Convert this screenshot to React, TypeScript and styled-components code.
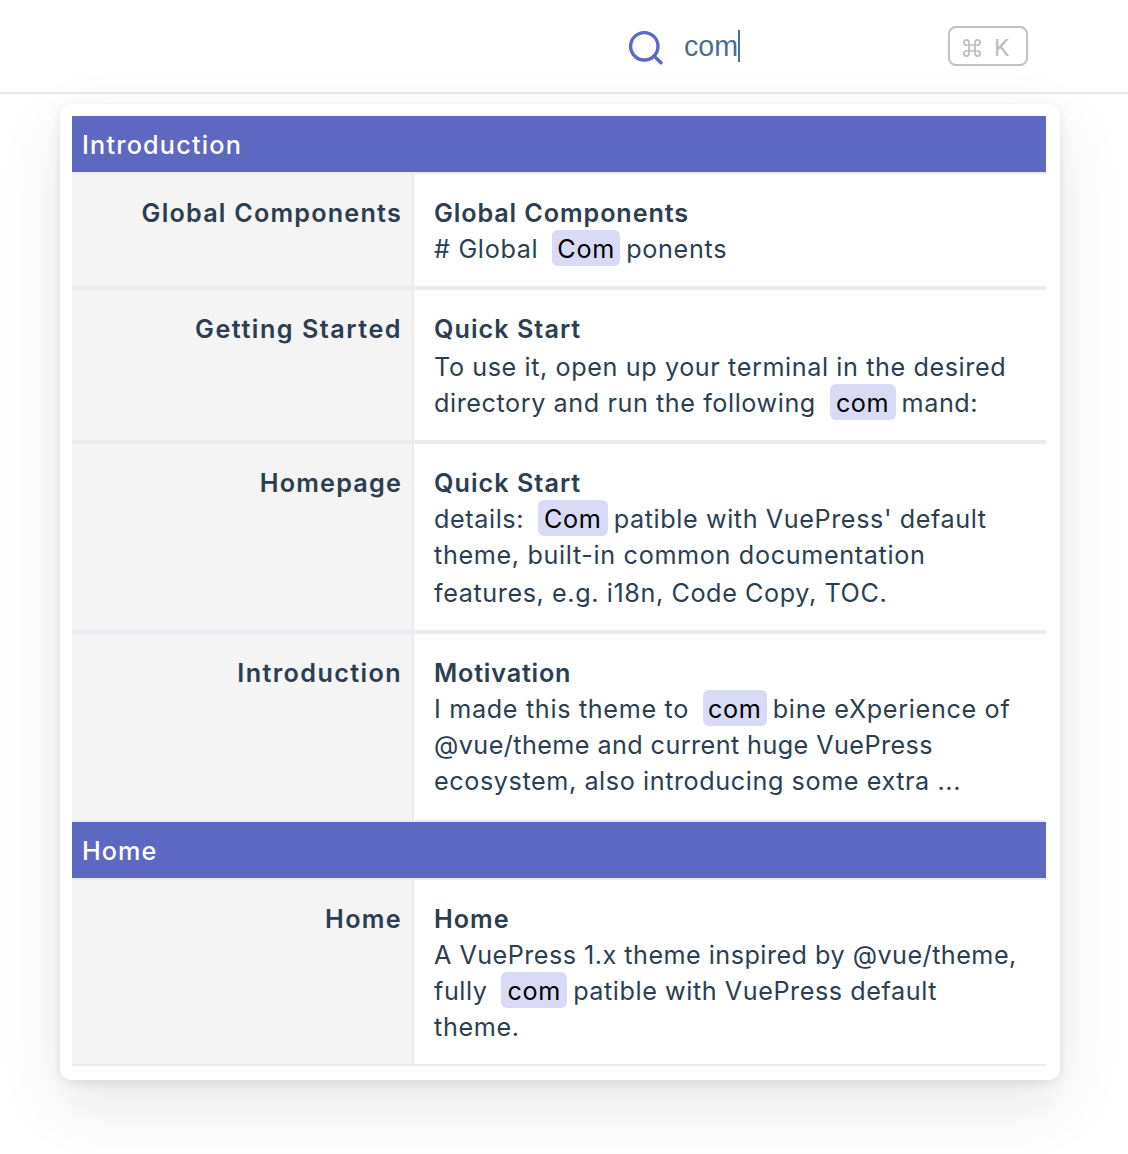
import React from "react";
import styled, { createGlobalStyle } from "styled-components";

const GlobalStyle = createGlobalStyle`
  * { box-sizing: border-box; }
  body {
    margin: 0;
    background: #fff;
    color: #2c3e50;
    font-family: Inter, "Liberation Sans", sans-serif;
    overflow: hidden;
  }
`;

const Page = styled.div`
  height: 1154px;
  overflow: hidden;
`;

const Navbar = styled.header`
  height: 94px;
  padding: 26px 100px 0 628px;
  display: flex;
  align-items: flex-start;
  border-bottom: 2px solid #e8e8ee;
`;

const SearchIcon = styled.svg`
  width: 36px;
  height: 36px;
  margin-top: 4px;
  flex: none;
`;

const Query = styled.div`
  display: flex;
  align-items: center;
  height: 40px;
  margin-left: 20px;
  flex: 1;
  font: 28.6px/40px "Liberation Sans", Arial, sans-serif;
  color: #4e6e8e;
`;

const Caret = styled.span`
  width: 2px;
  height: 32px;
  background: #4e6e8e;
`;

const Shortcut = styled.kbd`
  width: 80px;
  height: 40px;
  padding: 3px 0 0 12px;
  display: flex;
  align-items: center;
  gap: 12px;
  border: 2px solid #c2c2c2;
  border-radius: 8px;
  font: 24px/34px Roboto, sans-serif;
  color: #bdbdbd;
`;

const CommandIcon = styled.svg`
  width: 20px;
  height: 20px;
`;

const Panel = styled.main`
  width: 1000px;
  height: 976px;
  margin: 10px 0 0 60px;
  padding: 12px 14px 0 12px;
  background: #fff;
  border-radius: 12px;
  position: relative;
  font-size: 25.2px;
  box-shadow: 0 24px 64px rgba(0, 0, 0, 0.1), 0 4px 12px rgba(0, 0, 0, 0.08);
`;

const GroupTitle = styled.h2<{ $spacing?: number }>`
  margin: 0;
  height: 58px;
  padding: 0 10px;
  background: #5d68c1;
  border-bottom: 2px solid #eaeaef;
  color: #fff;
  font-size: inherit;
  font-weight: 500;
  line-height: 58px;
  letter-spacing: ${(p) => p.$spacing ?? 1.2}px;
`;

const Row = styled.section<{ $last?: boolean }>`
  display: grid;
  grid-template-columns: 342px 1fr;
  border-bottom: ${(p) => (p.$last ? 2 : 4)}px solid #eaeaef;
`;

const PageTitle = styled.div<{ $spacing?: number }>`
  padding: 20px 10px 20px 0;
  background: #f4f4f4;
  border-right: 2px solid #eaeaef;
  text-align: right;
  font-weight: 600;
  line-height: 38px;
  letter-spacing: ${(p) => p.$spacing ?? 1.3}px;
`;

const Content = styled.div<{ $bottom?: number }>`
  padding: 20px 0 ${(p) => p.$bottom ?? 20}px 20px;
`;

const Heading = styled.h3<{ $spacing?: number }>`
  margin: 0;
  height: 36px;
  font-size: inherit;
  font-weight: 600;
  line-height: 38px;
  letter-spacing: ${(p) => p.$spacing ?? 1.02}px;
`;

const Line = styled.div<{ $spacing?: number; $gap?: number }>`
  height: 36px;
  margin-top: ${(p) => p.$gap ?? 0}px;
  line-height: 38px;
  white-space: pre;
  letter-spacing: ${(p) => p.$spacing ?? 0.59}px;
`;

const Mark = styled.mark<{ $width: number }>`
  display: inline-block;
  vertical-align: top;
  width: ${(p) => p.$width}px;
  height: 36px;
  margin: 0 6px;
  text-align: center;
  background: #d9daf5;
  border-radius: 6px;
  color: #000;
`;

type TextLine = { before: string; hit?: string; after?: string; width?: number; gap?: number; spacing?: number };
type Result = {
  page: string;
  pageSpacing?: number;
  heading: string;
  headingSpacing?: number;
  bottom?: number;
  lines: TextLine[];
};
type Group = { title: string; spacing?: number; results: Result[] };

const groups: Group[] = [
  {
    title: "Introduction",
    results: [
      {
        page: "Global Components",
        pageSpacing: 1.2,
        heading: "Global Components",
        headingSpacing: 0.88,
        lines: [{ before: "# Global ", hit: "Com", after: "ponents", width: 68, spacing: 0.68 }],
      },
      {
        page: "Getting Started",
        pageSpacing: 1.5,
        heading: "Quick Start",
        lines: [
          { before: "To use it, open up your terminal in the desired", gap: 2 },
          { before: "directory and run the following ", hit: "com", after: "mand:", width: 66, spacing: 0.57 },
        ],
      },
      {
        page: "Homepage",
        pageSpacing: 1.18,
        heading: "Quick Start",
        lines: [
          { before: "details: ", hit: "Com", after: "patible with VuePress' default", width: 70 },
          { before: "theme, built-in common documentation", spacing: 0.65 },
          { before: "features, e.g. i18n, Code Copy, TOC.", gap: 2 },
        ],
      },
      {
        page: "Introduction",
        pageSpacing: 1.38,
        heading: "Motivation",
        headingSpacing: 0.8,
        bottom: 22,
        lines: [
          { before: "I made this theme to ", hit: "com", after: "bine eXperience of", width: 64, spacing: 0.67 },
          { before: "@vue/theme and current huge VuePress", spacing: 0.42 },
          { before: "ecosystem, also introducing some extra ...", spacing: 0.58 },
        ],
      },
    ],
  },
  {
    title: "Home",
    spacing: 1.05,
    results: [
      {
        page: "Home",
        heading: "Home",
        headingSpacing: 1.0,
        lines: [
          { before: "A VuePress 1.x theme inspired by @vue/theme,", spacing: 0.47 },
          { before: "fully ", hit: "com", after: "patible with VuePress default", width: 66, spacing: 0.56 },
          { before: "theme.", spacing: 0.65 },
        ],
      },
    ],
  },
];

export default function App() {
  return (
    <Page>
      <GlobalStyle />
      <Navbar>
        <SearchIcon viewBox="0 0 36 36" fill="none" stroke="#5d68c1" strokeWidth="3.4" strokeLinecap="round">
          <circle cx="16.3" cy="16.3" r="13.7" />
          <path d="M26.4 26.4 33 32.8" />
        </SearchIcon>
        <Query>
          com
          <Caret />
        </Query>
        <Shortcut>
          <CommandIcon viewBox="0 0 20 20" fill="none" stroke="#bdbdbd" strokeWidth="1.7">
            <path d="M7 7V4.4A2.6 2.6 0 1 0 4.4 7H15.6A2.6 2.6 0 1 0 13 4.4V15.6A2.6 2.6 0 1 0 15.6 13H4.4A2.6 2.6 0 1 0 7 15.6V7" />
          </CommandIcon>
          K
        </Shortcut>
      </Navbar>
      <Panel>
        {groups.map((group) => (
          <React.Fragment key={group.title}>
            <GroupTitle $spacing={group.spacing}>{group.title}</GroupTitle>
            {group.results.map((result, i) => (
              <Row key={result.page} $last={i === group.results.length - 1}>
                <PageTitle $spacing={result.pageSpacing}>{result.page}</PageTitle>
                <Content $bottom={result.bottom}>
                  <Heading $spacing={result.headingSpacing}>{result.heading}</Heading>
                  {result.lines.map((line) => (
                    <Line key={line.before} $gap={line.gap} $spacing={line.spacing}>
                      {line.before}
                      {line.hit && <Mark $width={line.width ?? 66}>{line.hit}</Mark>}
                      {line.after}
                    </Line>
                  ))}
                </Content>
              </Row>
            ))}
          </React.Fragment>
        ))}
      </Panel>
    </Page>
  );
}
